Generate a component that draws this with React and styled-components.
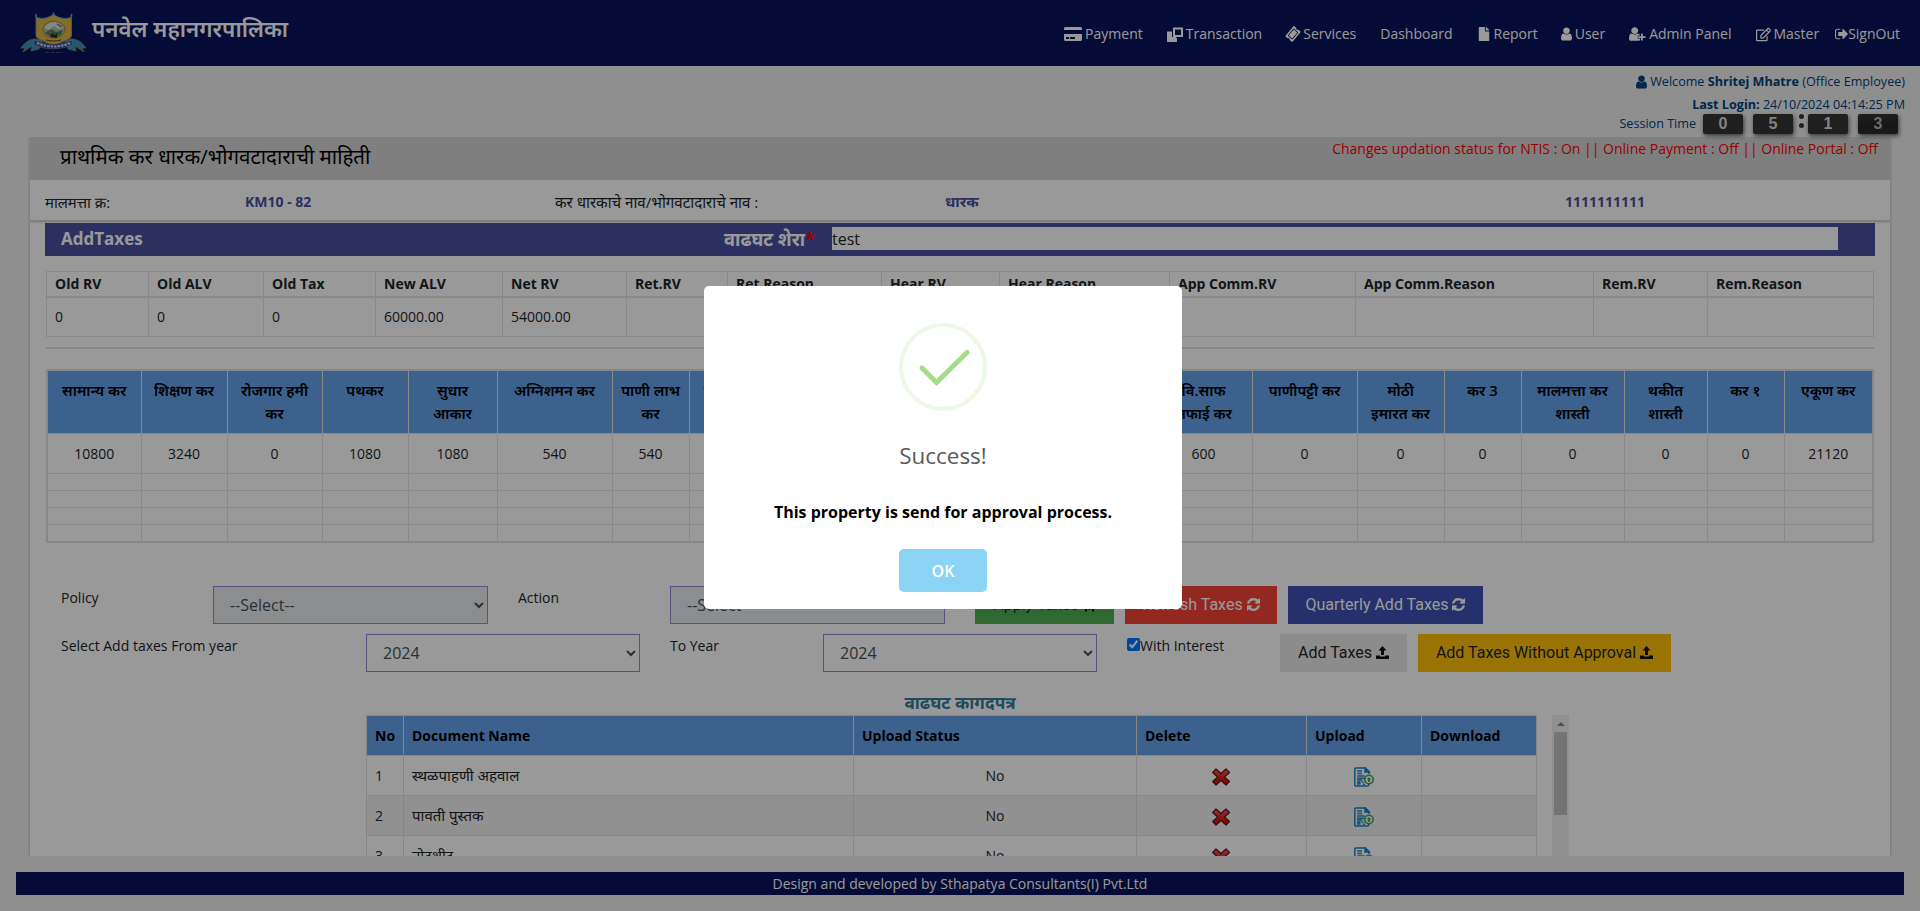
import React from "react";
import styled, { createGlobalStyle, css } from "styled-components";
import { FaCreditCard, FaRegEdit, FaFile, FaTicketAlt } from "react-icons/fa";

const Global = createGlobalStyle`
  * { box-sizing: border-box; }
  html, body { margin: 0; height: 100%; overflow: hidden; }
  body {
    background: #eeeeee;
    color: #212529;
    font-family: "Open Sans", "Noto Sans Devanagari", "Noto Sans", sans-serif;
    font-size: 14px;
    line-height: 20px;
  }
`;

const Page = styled.div`
  width: 1920px;
  height: 911px;
  overflow: hidden;
  display: flex;
  flex-direction: column;
`;

const Header = styled.header`
  flex: none;
  height: 66px;
  padding: 0 20px;
  background: #08135a;
  color: #fff;
  display: flex;
  justify-content: space-between;
`;

const Brand = styled.div`
  display: flex;
  gap: 5px;
`;

const Emblem = styled.svg`
  width: 67px;
  height: 42px;
  margin-top: 12px;
`;

const BrandName = styled.h1`
  margin: 13px 0 0;
  font-size: 22.300px;
  line-height: 32px;
  font-weight: 600;
  white-space: nowrap;
  width: 198px;
`;

const Nav = styled.nav`
  display: flex;
  align-items: center;
  padding-top: 2px;
`;

const NavItem = styled.a`
  display: flex;
  align-items: center;
  gap: ${(p) => p.$gap ?? 3}px;
  margin-left: ${(p) => p.$space ?? 24}px;
  white-space: nowrap;
  svg { display: block; flex: none; }
`;

const TicketIcon = styled(FaTicketAlt)`
  transform: rotate(-50deg);
`;

const Strip = styled.section`
  flex: none;
  height: 71px;
  padding: 5px 15px 0 0;
  color: #00427f;
  font-size: 12.600px;
  display: flex;
  flex-direction: column;
  align-items: flex-end;
`;

const StripLine = styled.div`
  display: flex;
  align-items: center;
  gap: 3px;
  height: ${(p) => p.$h}px;
  white-space: pre;
  b { font-weight: 700; }
`;

const Session = styled.div`
  display: flex;
  align-items: flex-start;
  height: 20px;
  margin: -3px 7px 0 0;
  z-index: 1;
`;

const SessionLabel = styled.span`
  margin-right: 7px;
`;

const Tile = styled.span`
  width: 40px;
  height: 20px;
  margin-right: ${(p) => p.$after ?? 0}px;
  border-radius: 2px;
  background: ${(p) => (p.$dark ? "linear-gradient(#333, #262626 60%, #2c2c2c)" : "#343434")};
  box-shadow: 1px 2px 4px rgba(0, 0, 0, 0.6);
  color: ${(p) => (p.$dark ? "#b5b5b5" : "#dadada")};
  font: 700 16px/20px "Liberation Sans", sans-serif;
  text-align: center;
`;

const Colon = styled.span`
  width: 5px;
  margin: 0 4px 0 6px;
  display: flex;
  flex-direction: column;
  gap: 4px;
  i { width: 5px; height: 5px; border-radius: 50%; background: #343434; }
`;

const Card = styled.main`
  flex: none;
  width: 1860px;
  height: 719px;
  margin: 0 30px;
  background: #fff;
  overflow: hidden;
  box-shadow: 0 1px 3px rgba(0, 0, 0, 0.25);
  clip-path: inset(0 -6px 0 -6px);
`;

const CardHead = styled.div`
  height: 43px;
  padding: 0 12px 0 30px;
  background: #d4d4d4;
  display: flex;
  justify-content: space-between;
`;

const CardTitle = styled.h2`
  margin: 3px 0 0;
  font-size: 20.500px;
  line-height: 32px;
  font-weight: 400;
  color: #000;
  white-space: nowrap;
`;

const Status = styled.div`
  padding-top: 2px;
  color: #ff0000;
  font-size: 14px;
  white-space: nowrap;
`;

const OwnerRow = styled.div`
  display: grid;
  grid-template-columns: 200px 310px 390px 620px 1fr;
  align-items: center;
  height: 41px;
  padding: 3px 0 0 15px;
  border-bottom: 1px solid #d6d6d6;
  box-shadow: 0 1px 2px rgba(0, 0, 0, 0.25);
  white-space: nowrap;
`;

const Marathi = styled.span`
  font-size: ${(p) => p.$size ?? 15}px;
`;

const Value = styled.b`
  color: #4850a0;
  font-weight: 700;
`;

const TaxBar = styled.div`
  height: 33px;
  margin: 2px 15px 0;
  background: #4850a0;
  color: #fff;
  display: grid;
  grid-template-columns: 663px 108px 1006px;
  padding-left: 16px;
  font-size: 17px;
  font-weight: 700;
  white-space: nowrap;
`;

const BarText = styled.div`
  line-height: 32px;
  em { color: #f00; font-style: normal; }
`;

const RemarkInput = styled.input`
  height: 23px;
  margin-top: 4px;
  padding: 0;
  border: 0;
  border-radius: 0;
  background: #fff;
  color: #212529;
  font: 400 16px/22px "Open Sans", sans-serif;
`;

const Table = styled.table`
  border-collapse: collapse;
  table-layout: fixed;
`;

const RvTable = styled(Table)`
  width: 1828px;
  margin: 15px 0 0 16px;
  th, td { border: 1px solid #e4e4e4; padding: 0 8px; text-align: left; }
  th { height: 25px; border-bottom-width: 2px; font-weight: 700; white-space: nowrap; }
  td { height: 40px; }
`;

const Rule = styled.div`
  height: 2px;
  margin: 10px 16px 0;
  background: #dee2e6;
`;

const TaxTable = styled(Table)`
  width: 1828px;
  margin: 20px 0 0 16px;
  border: 2px solid #dee2e6;
  th, td { border: 1px solid #e4e4e4; text-align: center; }
  th {
    height: 63px;
    padding: 8px 0;
    background: #66a2eb;
    color: #000;
    font-weight: 600;
    font-size: 14.900px;
    line-height: 23px;
    vertical-align: top;
    white-space: pre;
  }
  td { height: 17px; padding: 0; }
  tr.amounts td { height: 40px; }
`;

const Controls = styled.div`
  padding: 43px 0 0 31px;
  display: flex;
  flex-direction: column;
  gap: 10px;
`;

const ControlRow = styled.div`
  display: flex;
  height: 38px;
`;

const Label = styled.label`
  width: ${(p) => p.$w}px;
  padding-top: 2px;
  white-space: nowrap;
`;

const Select = styled.select`
  width: ${(p) => p.$w ?? 274}px;
  height: 38px;
  margin-right: ${(p) => p.$after ?? 30}px;
  padding: 6px 0 6px 12px;
  border: 1px solid #9a86d6;
  border-radius: 0;
  background: ${(p) => (p.$off ? "#e9ecef" : "#fff")};
  color: #495057;
  font: 400 16px "Open Sans", sans-serif;
`;

const tones = {
  green: css`background: #4caf50; color: #212529;`,
  red: css`background: #f44336; color: #fff;`,
  indigo: css`background: #3f51b5; color: #fff;`,
  grey: css`background: #e9e9e9; color: #212529;`,
  amber: css`background: #ffc107; color: #212529;`,
};

const Button = styled.button`
  width: ${(p) => p.$w}px;
  height: 38px;
  margin-right: 11px;
  padding: 0;
  border: 0;
  display: flex;
  align-items: center;
  justify-content: center;
  gap: 4px;
  font: 400 16px "Roboto", sans-serif;
  white-space: nowrap;
  ${(p) => tones[p.$tone]}
`;

const Interest = styled.label`
  width: 153px;
  display: flex;
  align-items: flex-start;
  line-height: 24px;
  input { width: 13px; height: 13px; margin: 4px 0 0 0; }
`;

const DocTitle = styled.h3`
  margin: 19px 0 0;
  height: 24px;
  line-height: 24px;
  font-size: 17.200px;
  font-weight: 700;
  color: #347d9c;
  text-align: center;
`;

const DocArea = styled.div`
  display: flex;
  gap: 15px;
  margin-left: 336px;
  align-items: flex-start;
`;

const DocTable = styled(Table)`
  width: 1171px;
  th, td { height: 40px; border: 1px solid #e2e2e2; padding: 1px 8px 0; text-align: left; }
  th { background: #66a2eb; color: #000; font-weight: 700; white-space: nowrap; }
  tbody tr:nth-child(even) { background: #f2f2f2; }
  td.mid { text-align: center; }
  td svg { display: block; margin: 2px auto 0; }
`;

const Scrollbar = styled.div`
  width: 17px;
  height: 300px;
  background: #f1f1f1;
  display: flex;
  flex-direction: column;
  align-items: center;
`;

const ScrollArrow = styled.svg`
  width: 8px;
  height: 4px;
  margin: 7px 0 6px;
  flex: none;
`;

const Thumb = styled.div`
  width: 13px;
  height: 83px;
  background: #c1c1c1;
`;

const Footer = styled.footer`
  flex: none;
  width: 1888px;
  height: 23px;
  margin: 16px 16px 0;
  background: #08135a;
  color: #fff;
  text-align: center;
  line-height: 23px;
`;

const Overlay = styled.div`
  position: fixed;
  inset: 0;
  z-index: 10;
  background: rgba(0, 0, 0, 0.4);
`;

const Modal = styled.div`
  position: absolute;
  left: 704px;
  top: 286px;
  width: 478px;
  height: 323px;
  padding-top: 37px;
  border-radius: 5px;
  background: #fff;
  display: flex;
  flex-direction: column;
  align-items: center;
`;

const Tick = styled.svg`
  width: 88px;
  height: 88px;
  flex: none;
`;

const ModalTitle = styled.div`
  margin-top: 29px;
  font-size: 22.400px;
  line-height: 32px;
  font-weight: 500;
  color: #595959;
`;

const ModalText = styled.div`
  margin-top: 28px;
  font-size: 16px;
  line-height: 24px;
  font-weight: 700;
  color: #000;
  white-space: nowrap;
`;

const OkButton = styled.button`
  width: 88px;
  height: 43px;
  margin-top: 25px;
  border: 0;
  border-radius: 5px;
  background: #8cd4f5;
  color: #fff;
  font: 600 16px "Open Sans", sans-serif;
`;

const personPath =
  "M1536 1399q0 109-62.5 187t-150.5 78h-854q-88 0-150.5-78t-62.5-187q0-85 8.5-160.5t31.5-152 58.5-131 94-89 134.5-34.5q131 128 313 128t313-128q76 0 134.5 34.5t94 89 58.5 131 31.5 152 8.5 160.5zm-256-887q0 159-112.5 271.5t-271.5 112.5-271.5-112.5-112.5-271.5 112.5-271.5 271.5-112.5 271.5 112.5 112.5 271.5z";

const Person = () => (
  <svg width="11" height="14" viewBox="256 128 1280 1536" fill="currentColor"><path d={personPath} /></svg>
);
const PersonPlus = () => (
  <svg width="17" height="14" viewBox="256 128 1900 1536" fill="currentColor">
    <path d={personPath} />
    <path d="M1600 850h200v290h300v200h-300v290h-200v-290h-300v-200h300z" stroke="#08135a" strokeWidth="130" paintOrder="stroke" />
  </svg>
);
const Windows = () => (
  <svg width="16" height="15" viewBox="0 0 16 15" fill="none" stroke="currentColor" strokeWidth="2">
    <path d="M7 1.500h8v7.500H7z" />
    <path d="M5 5.500H1V14h8V11" />
    <path d="M1 10h8v4H1zM1 5h4v6H1z" fill="currentColor" stroke="none" />
  </svg>
);
const SignOutIcon = () => (
  <svg width="13" height="12" viewBox="64 256 1568 1280" fill="currentColor">
    <path d="M704 1440q0 4 1 20t.5 26.5-3 23.5-10 19.5-20.500 6.500h-320q-119 0-203.500-84.500t-84.500-203.500v-704q0-119 84.500-203.500t203.500-84.500h320q13 0 22.500 9.500t9.500 22.500q0 4 1 20t.5 26.500-3 23.500-10 19.500-20.500 6.500h-320q-66 0-113 47t-47 113v704q0 66 47 113t113 47h312l11.500 1 11.500 3 8 5.500 7 9 2 13.500zm928-544q0 26-19 45l-544 544q-19 19-45 19t-45-19-19-45v-288h-448q-26 0-45-19t-19-45v-384q0-26 19-45t45-19h448v-288q0-26 19-45t45-19 45 19l544 544q19 19 19 45z" />
  </svg>
);
const Refresh = () => (
  <svg width="13" height="13" viewBox="128 128 1536 1536" fill="currentColor" stroke="currentColor" strokeWidth="40">
    <path d="M1639 1056q0 5-1 7-64 268-268 434.500t-478 166.500q-146 0-282.500-55t-243.500-157l-129 129q-19 19-45 19t-45-19-19-45v-448q0-26 19-45t45-19h448q26 0 45 19t19 45-19 45l-137 137q71 66 161 102t187 36q134 0 250-65t186-179q11-17 53-117 8-23 30-23h192q13 0 22.500 9.500t9.500 22.500zm25-800v448q0 26-19 45t-45 19h-448q-26 0-45-19t-19-45 19-45l138-138q-148-137-349-137-134 0-250 65t-186 179q-11 17-53 117-8 23-30 23h-199q-13 0-22.500-9.500t-9.500-22.500v-7q65-268 270-434.500t480-166.500q146 0 284 55.500t245 156.500l130-129q19-19 45-19t45 19 19 45z" />
  </svg>
);
const UploadIcon = () => (
  <svg width="13" height="13" viewBox="0 0 13 13" fill="#111">
    <path d="M6.500 0L10.500 4.600H8V9H5V4.600H2.500zM0 9.500h4v1h5v-1h4V13H0z" />
  </svg>
);
const Star = () => (
  <svg width="13" height="14" viewBox="0 0 13 14" fill="none" stroke="#111" strokeWidth="2">
    <path d="M2 2h9M3 8h7M3 13.500V8l3.500 3L10 8v5.500" />
  </svg>
);
const Cross = () => (
  <svg width="20" height="20" viewBox="0 0 20 20">
    <defs>
      <linearGradient id="crossFill" x1="0" y1="0" x2="0" y2="1">
        <stop offset="0" stopColor="#f06060" />
        <stop offset="0.5" stopColor="#dd2222" />
        <stop offset="1" stopColor="#e00000" />
      </linearGradient>
    </defs>
    <path
      d="M4 2L9 6.500l5-4.500L17.500 5.500 12.500 10l5 4.500L14 18 9 13.500 4 18 .7 14.500l5-4.500-5-4.500z"
      fill="url(#crossFill)" stroke="#5a1414" strokeWidth="1.200" strokeLinejoin="round"
    />
  </svg>
);
const DocUpload = () => (
  <svg width="20" height="20" viewBox="0 0 20 20" fill="none" stroke="#1c86bd" strokeWidth="1.500">
    <path d="M15 7V4.500L11.500 1H1.500a.7.7 0 0 0-.7.700v16.600a.7.700 0 0 0 .7.700H13q2 0 2-2" />
    <path d="M11 1v4h4z" fill="#1c86bd" />
    <path d="M3.200 4H8M3.200 6.500H8M3.200 9h7.500M3.200 11.200h7.500M3.200 13h5" strokeWidth="1.500" />
    <path d="M3.800 15h2v2h-2zM7.500 15h2M9 17.200h2" strokeWidth="1.400" />
    <circle cx="15" cy="12.500" r="4.200" stroke="#35a852" strokeWidth="1.600" />
    <path d="M15 10l2.200 2.500h-1.300V15h-1.800v-2.500h-1.300z" fill="#35a852" stroke="none" />
  </svg>
);

const Logo = () => (
  <Emblem viewBox="0 0 67 42">
    <path d="M1 36c5-7 9-9 15-9l6 2-3 8-8 2 1-5-9 6 2-4z" fill="#3694bd" stroke="#9c8a4a" strokeWidth=".7" />
    <path d="M66 36c-5-7-9-9-15-9l-6 2 3 8 8 2-1-5 9 6-2-4z" fill="#3694bd" stroke="#9c8a4a" strokeWidth=".7" />
    <path d="M16 5c6 3 12 1 17.500-2.500C39 6 45 8 51.500 5v18c0 5-8 5-18 11-10-6-17.500-6-17.500-11z" fill="#e0b345" stroke="#59a5a8" strokeWidth="1" />
    <path d="M16 5V2M33.500 3V.5M51.500 5V2" stroke="#55b4d4" strokeWidth="1.500" />
    <ellipse cx="34" cy="17.500" rx="11" ry="8.500" fill="#9fc0a4" stroke="#877332" strokeWidth=".7" />
    <path d="M24 16q4-6 10-6t10 6l-6 1-4-3-5 4z" fill="#dde3d0" />
    <path d="M25 21l6-4 5 3 7-2-2 5-8 3z" fill="#4d7f5b" />
    <path d="M28 19l4 2M37 12l5 3" stroke="#bd6a52" strokeWidth="1.500" />
    <path d="M30 25l2-4 3 2 2-2v5z" fill="#2a2a36" />
    <path d="M26 28q8 2 15 0" stroke="#5a4a20" fill="none" strokeWidth="1.200" />
    <path d="M14 28q19 8 38 0v5q-19 8-38 0z" fill="#3c4b9c" stroke="#a7a07a" strokeWidth=".5" />
    <path d="M17 31q17 7 33 0" stroke="#d5d8ea" strokeWidth="2" strokeDasharray="2.500 1" fill="none" />
    <path d="M25 40.500h18" stroke="#454c80" strokeWidth="1" strokeDasharray="4 1.500" />
  </Emblem>
);

const rvColumns = [
  ["Old RV", "0", 102], ["Old ALV", "0", 115], ["Old Tax", "0", 112], ["New ALV", "60000.00", 127],
  ["Net RV", "54000.00", 124], ["Ret.RV", "", 101], ["Ret Reason", "", 154], ["Hear RV", "", 118],
  ["Hear Reason", "", 170], ["App Comm.RV", "", 186], ["App Comm.Reason", "", 238],
  ["Rem.RV", "", 114], ["Rem.Reason", "", 166],
];

const taxColumns = [
  ["सामान्य कर", "10800", 94], ["शिक्षण कर", "3240", 86], ["रोजगार हमी\nकर", "0", 95],
  ["पथकर", "1080", 86], ["सुधार\nआकार", "1080", 89], ["अग्निशमन कर", "540", 115],
  ["पाणी लाभ\nकर", "540", 77], ["विशेष स्वच्छता\nकर", "0", 111], ["वृक्ष कर", "0", 89], ["मल कर", "0", 89],
  ["जल कर", "0", 89], ["रस्ता कर", "0", 88], ["वि.साफ\nसफाई कर", "600", 97],
  ["पाणीपट्टी कर", "0", 105], ["मोठी\nइमारत कर", "0", 87], ["कर 3", "0", 77],
  ["मालमत्ता कर\nशास्ती", "0", 103], ["थकीत\nशास्ती", "0", 83], ["कर १", "0", 77], ["एकूण कर", "21120", 89],
];

const docColumns = [["No", 37], ["Document Name", 450], ["Upload Status", 283], ["Delete", 170], ["Upload", 115], ["Download", 115]];
const docs = ["स्थळपाहणी अहवाल", "पावती पुस्तक", "नोटशीट"];

export default function App() {
  return (
    <>
      <Global />
      <Page>
        <Header>
          <Brand>
            <Logo />
            <BrandName>पनवेल महानगरपालिका</BrandName>
          </Brand>
          <Nav>
            <NavItem><FaCreditCard size={18} />Payment</NavItem>
            <NavItem><Windows />Transaction</NavItem>
            <NavItem><TicketIcon size={14} />Services</NavItem>
            <NavItem>Dashboard</NavItem>
            <NavItem $space={24}><FaFile size={14} />Report</NavItem>
            <NavItem $space={23}><Person />User</NavItem>
            <NavItem><PersonPlus />Admin Panel</NavItem>
            <NavItem><FaRegEdit size={15} />Master</NavItem>
            <NavItem $space={16} $gap={0}><SignOutIcon />SignOut</NavItem>
          </Nav>
        </Header>
        <Strip>
          <StripLine $h={21}><Person /><span>Welcome <b>Shritej Mhatre</b> (Office Employee)</span></StripLine>
          <StripLine $h={25}><span><b>Last Login:</b> 24/10/2024 04:14:25 PM</span></StripLine>
          <Session>
            <SessionLabel>Session Time</SessionLabel>
            <Tile $after={10}>0</Tile>
            <Tile>5</Tile>
            <Colon><i /><i /></Colon>
            <Tile $after={10}>1</Tile>
            <Tile $dark>3</Tile>
          </Session>
        </Strip>
        <Card>
          <CardHead>
            <CardTitle>प्राथमिक कर धारक/भोगवटादाराची माहिती</CardTitle>
            <Status>Changes updation status for NTIS : On || Online Payment : Off || Online Portal : Off</Status>
          </CardHead>
          <OwnerRow>
            <Marathi $size={14.9}>मालमत्ता क्र:</Marathi>
            <Value>KM10 - 82</Value>
            <Marathi $size={15.1}>कर धारकाचे नाव/भोगवटादाराचे नाव :</Marathi>
            <Value><Marathi>धारक</Marathi></Value>
            <Value>1111111111</Value>
          </OwnerRow>
          <TaxBar>
            <BarText>AddTaxes</BarText>
            <BarText><Marathi $size={18.3}>वाढघट शेरा<em>*</em></Marathi></BarText>
            <RemarkInput defaultValue="test" />
          </TaxBar>
          <RvTable>
            <colgroup>{rvColumns.map(([n, , w]) => <col key={n} width={w} />)}</colgroup>
            <thead><tr>{rvColumns.map(([n]) => <th key={n}>{n}</th>)}</tr></thead>
            <tbody><tr>{rvColumns.map(([n, v]) => <td key={n}>{v}</td>)}</tr></tbody>
          </RvTable>
          <Rule />
          <TaxTable>
            <colgroup>{taxColumns.map(([n, , w]) => <col key={n} width={w} />)}</colgroup>
            <thead><tr>{taxColumns.map(([n]) => <th key={n}>{n}</th>)}</tr></thead>
            <tbody>
              <tr className="amounts">{taxColumns.map(([n, v]) => <td key={n}>{v}</td>)}</tr>
              {[0, 1, 2, 3].map((r) => <tr key={r}>{taxColumns.map(([n]) => <td key={n} />)}</tr>)}
            </tbody>
          </TaxTable>
          <Controls>
            <ControlRow>
              <Label $w={152}>Policy</Label>
              <Select $w={275} $off><option>--Select--</option></Select>
              <Label $w={152}>Action</Label>
              <Select $w={275} $off><option>--Select--</option></Select>
              <Button $w={139} $tone="green">Apply Taxes <Star /></Button>
              <Button $w={152} $tone="red">Refresh Taxes <Refresh /></Button>
              <Button $w={195} $tone="indigo">Quarterly Add Taxes <Refresh /></Button>
            </ControlRow>
            <ControlRow>
              <Label $w={305}>Select Add taxes From year</Label>
              <Select><option>2024</option></Select>
              <Label $w={153}>To Year</Label>
              <Select><option>2024</option></Select>
              <Interest><input type="checkbox" defaultChecked />With Interest</Interest>
              <Button $w={127} $tone="grey">Add Taxes <UploadIcon /></Button>
              <Button $w={253} $tone="amber">Add Taxes Without Approval <UploadIcon /></Button>
            </ControlRow>
          </Controls>
          <DocTitle>वाढघट कागदपत्र</DocTitle>
          <DocArea>
            <DocTable>
              <colgroup>{docColumns.map(([n, w]) => <col key={n} width={w} />)}</colgroup>
              <thead><tr>{docColumns.map(([n]) => <th key={n}>{n}</th>)}</tr></thead>
              <tbody>
                {docs.map((name, i) => (
                  <tr key={name}>
                    <td>{i + 1}</td>
                    <td><Marathi>{name}</Marathi></td>
                    <td className="mid">No</td>
                    <td><Cross /></td>
                    <td><DocUpload /></td>
                    <td />
                  </tr>
                ))}
              </tbody>
            </DocTable>
            <Scrollbar>
              <ScrollArrow viewBox="0 0 8 4"><path d="M4 0l4 4H0z" fill="#858585" /></ScrollArrow>
              <Thumb />
            </Scrollbar>
          </DocArea>
        </Card>
        <Footer>Design and developed by Sthapatya Consultants(I) Pvt.Ltd</Footer>
      </Page>
      <Overlay>
        <Modal>
          <Tick viewBox="0 0 88 88" fill="none">
            <circle cx="44" cy="44" r="42" stroke="#edf8e7" strokeWidth="4" />
            <path d="M23 45l14.500 14.500L68 29.500" stroke="#a5dc86" strokeWidth="5" strokeLinecap="round" />
          </Tick>
          <ModalTitle>Success!</ModalTitle>
          <ModalText>This property is send for approval process.</ModalText>
          <OkButton>OK</OkButton>
        </Modal>
      </Overlay>
    </>
  );
}
